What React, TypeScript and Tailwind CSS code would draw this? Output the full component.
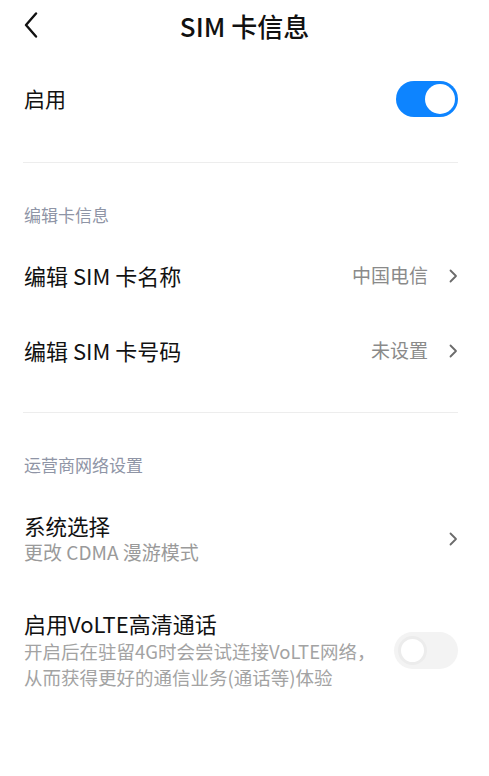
import { ReactNode } from 'react';

const Chevron = () => (
  <svg width="9" height="14" viewBox="0 0 9 14" fill="none" className="shrink-0">
    <path d="M1.5 1.5L7 7L1.5 12.5" stroke="#6b6b6b" strokeWidth="1.8" strokeLinecap="round" strokeLinejoin="round" />
  </svg>
);

const Toggle = ({ on }: { on: boolean }) =>
  on ? (
    <div className="flex h-[36px] w-[62px] items-center justify-end rounded-full bg-[#0d84ff] p-[3px]">
      <div className="h-[30px] w-[30px] rounded-full bg-white" />
    </div>
  ) : (
    <div className="flex h-[37px] w-[64px] items-center justify-start rounded-full bg-[#f3f3f3] p-[4px]">
      <div className="h-[29px] w-[29px] rounded-full border-[3px] border-[#ececec] bg-white" />
    </div>
  );

const SectionLabel = ({ children }: { children: ReactNode }) => (
  <div className="flex h-[30px] items-center px-6 text-[17px] text-[#8f95a6]">{children}</div>
);

const Divider = () => <div className="mr-[31px] ml-[23px] h-px bg-[#ededed]" />;

const NavRow = ({ title, value }: { title: string; value: string }) => (
  <div className="flex h-[75px] items-center justify-between pr-[31px] pl-6">
    <span className="text-[22px] text-[#111]">{title}</span>
    <div className="flex items-center gap-[21px]">
      <span className="text-[19px] text-[#8a8a8a]">{value}</span>
      <Chevron />
    </div>
  </div>
);

export default function App() {
  return (
    <div
      className="min-h-screen w-[489px] bg-white"
      style={{ fontFamily: '"Noto Sans CJK SC", "Noto Sans", sans-serif' }}
    >
      {/* 顶部导航 */}
      <header className="relative flex h-[50px] items-center justify-center">
        <svg width="14" height="26" viewBox="0 0 14 26" fill="none" className="absolute top-[12px] left-[24px]">
          <path d="M12 1.5L2 13L12 24.5" stroke="#111" strokeWidth="2.4" strokeLinecap="round" strokeLinejoin="round" />
        </svg>
        <h1 className="text-[26px] font-medium text-[#111]">SIM 卡信息</h1>
      </header>

      {/* 启用 */}
      <div className="flex h-[98px] items-center justify-between pr-[31px] pl-6">
        <span className="text-[21px] text-[#111]">启用</span>
        <Toggle on />
      </div>

      <div className="mt-[14px]">
        <Divider />
      </div>

      {/* 编辑卡信息 */}
      <div className="mt-[37px]">
        <SectionLabel>编辑卡信息</SectionLabel>
      </div>
      <div className="mt-[8px]">
        <NavRow title="编辑 SIM 卡名称" value="中国电信" />
        <NavRow title="编辑 SIM 卡号码" value="未设置" />
      </div>

      <div className="mt-[24px]">
        <Divider />
      </div>

      {/* 运营商网络设置 */}
      <div className="mt-[37px]">
        <SectionLabel>运营商网络设置</SectionLabel>
      </div>

      <div className="mt-[33px] flex items-center justify-between pr-[31px] pl-6">
        <div className="flex flex-col">
          <span className="h-[26px] text-[21.5px] leading-[26px] text-[#111]">系统选择</span>
          <span className="h-[26px] text-[19px] leading-[26px] text-[#9a9a9a]">更改 CDMA 漫游模式</span>
        </div>
        <Chevron />
      </div>

      <div className="mt-[45px] flex items-center justify-between pr-[31px] pl-6">
        <div className="flex flex-col">
          <span className="h-[26px] text-[22px] leading-[26px] text-[#111]">启用VoLTE高清通话</span>
          <p className="mt-[2px] text-[18.5px] leading-[26px] whitespace-nowrap text-[#a3a3a3]">
            开启后在驻留4G时会尝试连接VoLTE网络，
            <br />
            从而获得更好的通信业务(通话等)体验
          </p>
        </div>
        <Toggle on={false} />
      </div>
    </div>
  );
}
